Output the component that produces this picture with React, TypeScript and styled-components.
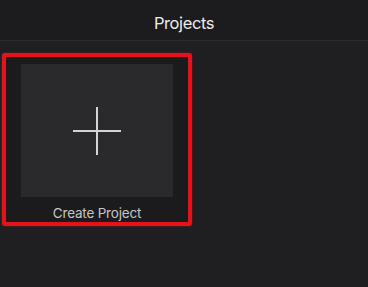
import React from 'react'
import styled, { createGlobalStyle } from 'styled-components'

const Global = createGlobalStyle`
  html, body {
    margin: 0;
    padding: 0;
    background: #1f1f21;
  }
  body {
    font-family: Inter, "Noto Sans", "Liberation Sans", sans-serif;
    -webkit-font-smoothing: antialiased;
  }
`

const Screen = styled.div`
  width: 368px;
  height: 287px;
  background: #1f1f21;
  display: flex;
  flex-direction: column;
  overflow: hidden;
`

const Header = styled.header`
  height: 40px;
  border-bottom: 1px solid #2c2c2e;
  background: #1c1c1e;
  display: flex;
  align-items: center;
  justify-content: center;
`

const Title = styled.h1`
  margin: 0;
  padding-top: 5px;
  font-size: 16.5px;
  font-weight: 400;
  color: #ececec;
  letter-spacing: -0.4px;
`

const Grid = styled.div`
  display: flex;
  padding: 12px 0 0 2px;
`

const Card = styled.div<{ $selected?: boolean }>`
  width: 190px;
  height: 173px;
  box-sizing: border-box;
  border: 4px solid ${(p) => (p.$selected ? '#e5121c' : 'transparent')};
  border-radius: 3px;
  background: #1b1b1d;
  box-shadow: ${(p) => (p.$selected ? '0 0 2px rgba(229, 18, 28, 0.6)' : 'none')};
  display: flex;
  flex-direction: column;
  align-items: center;
  padding: 7px 15px 0;
`

const Thumb = styled.div`
  width: 152px;
  height: 133px;
  background: #2a2a2c;
  display: flex;
  align-items: center;
  justify-content: center;
`

const Label = styled.span`
  margin-top: 8px;
  font-size: 13.5px;
  color: #c6c6c6;
  letter-spacing: -0.2px;
`

const PlusIcon = () => (
  <svg width="50" height="50" viewBox="0 0 50 50">
    <path d="M25 1v48M1 25h48" stroke="#d4d4d4" strokeWidth="2" fill="none" />
  </svg>
)

export default function App() {
  return (
    <Screen>
      <Global />
      <Header>
        <Title>Projects</Title>
      </Header>
      <Grid>
        <Card $selected>
          <Thumb>
            <PlusIcon />
          </Thumb>
          <Label>Create Project</Label>
        </Card>
      </Grid>
    </Screen>
  )
}
